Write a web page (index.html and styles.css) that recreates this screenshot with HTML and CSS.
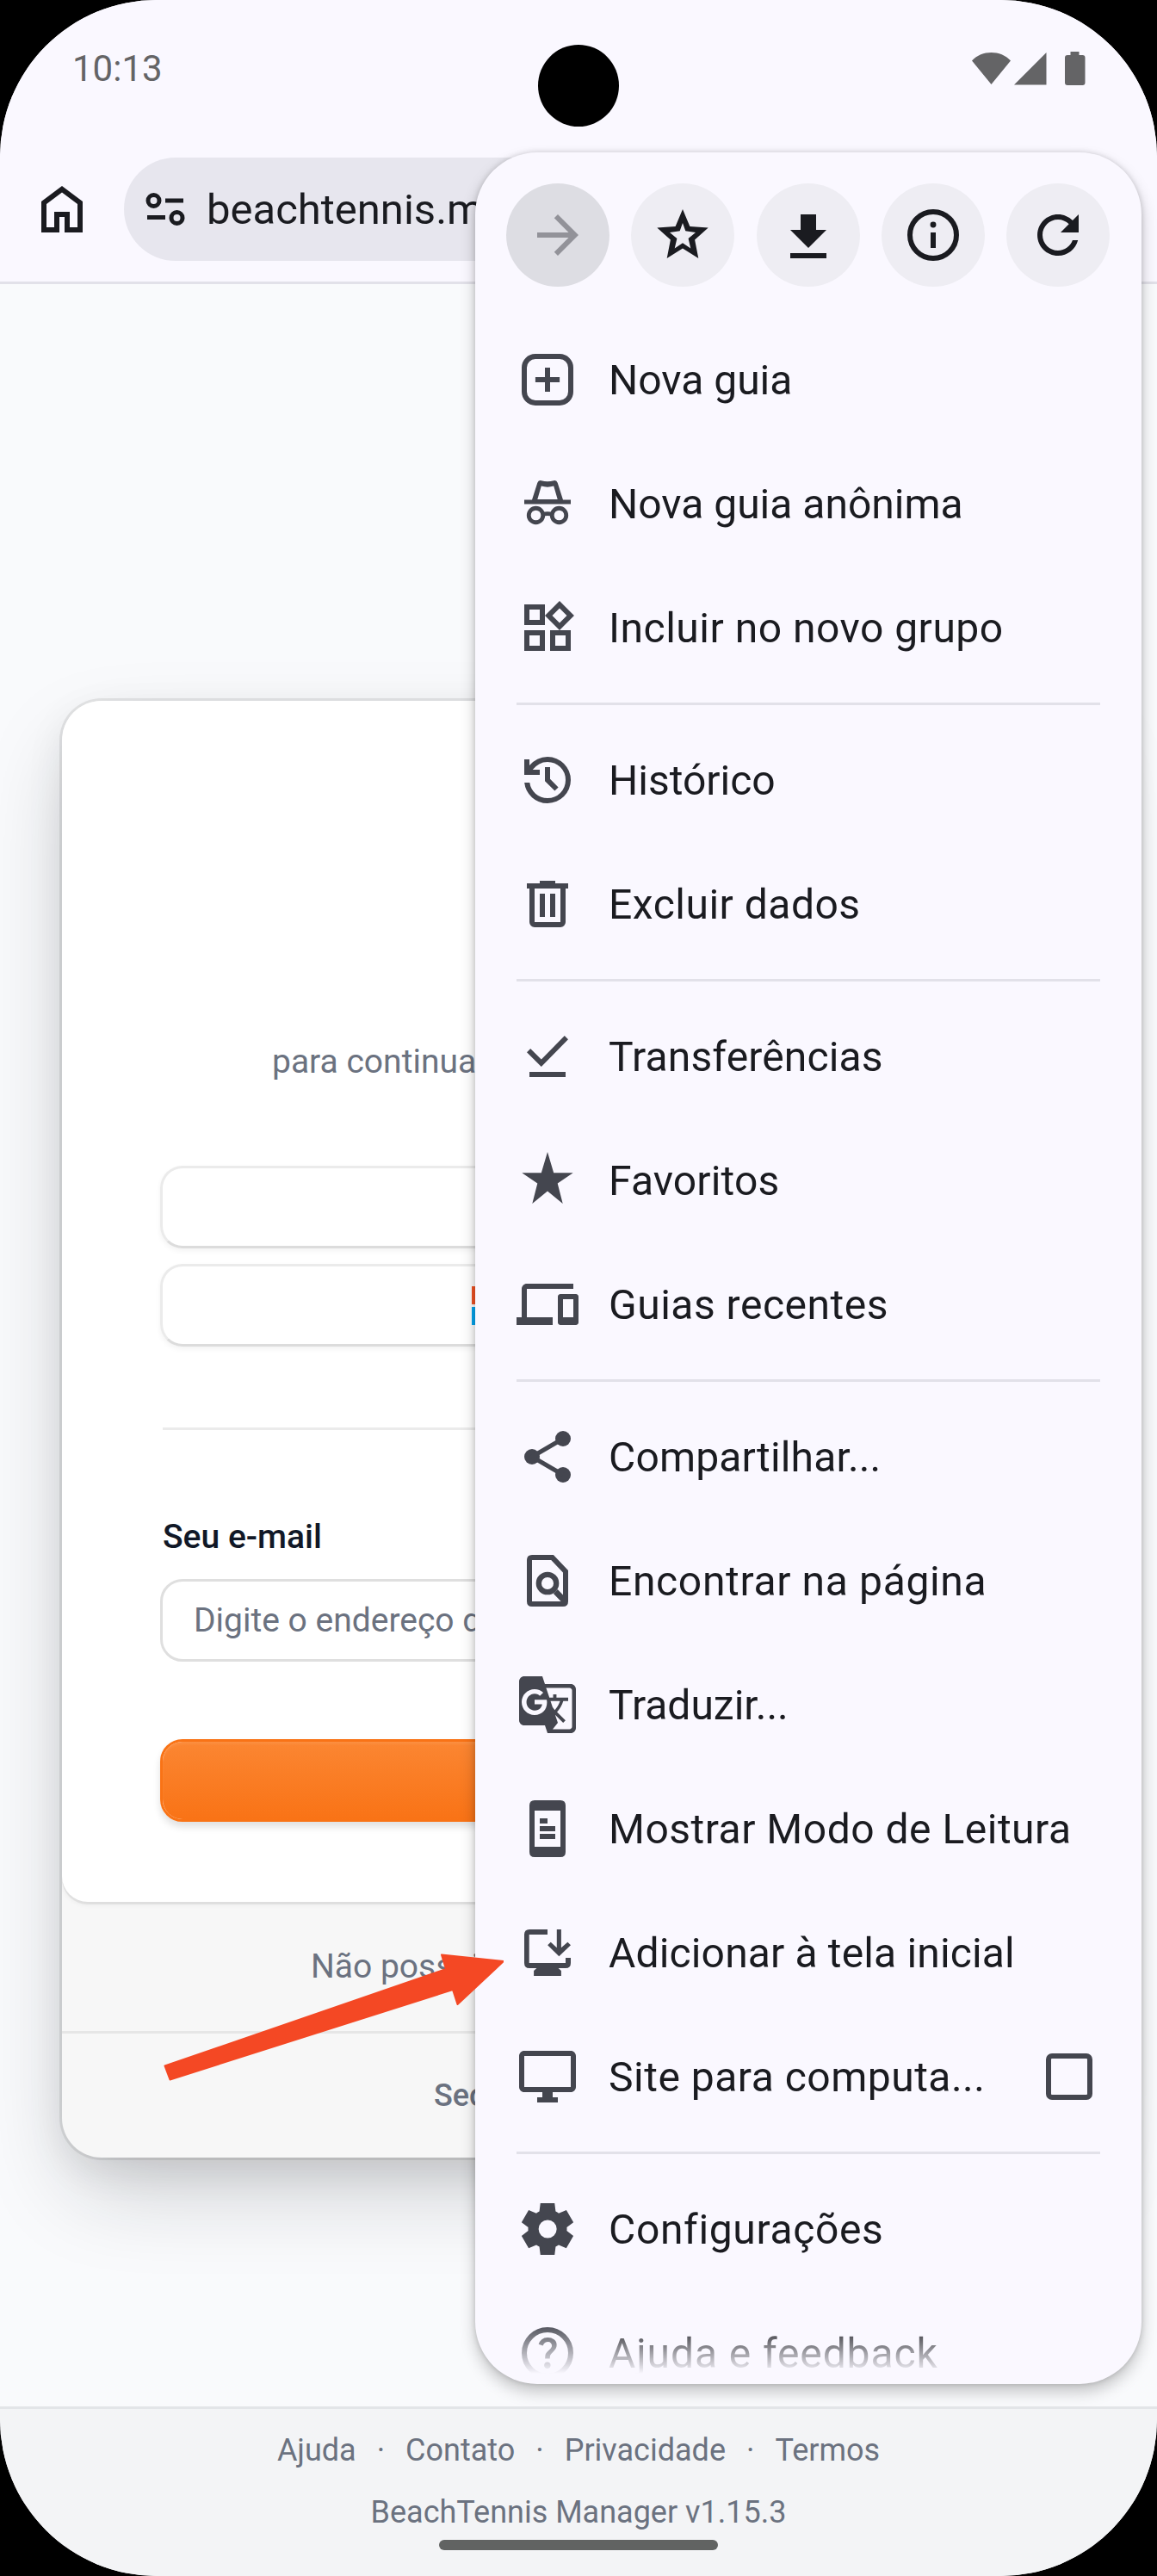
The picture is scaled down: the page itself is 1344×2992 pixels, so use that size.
FILE: index.html
```html
<!DOCTYPE html>
<html lang="pt-BR">
<head>
<meta charset="utf-8">
<title>BeachTennis Manager</title>
<link rel="stylesheet" href="styles.css">
</head>
<body>
<div class="screen">
  <header class="status-bar">
    <span class="time">10:13</span>
    <svg class="status-icons" width="132" height="40" viewBox="0 0 132 40"><path d="M0 10.500C6 4 14 1 22.500 1S39 4 45 10.500L22.500 38zM86.500 1v37.500H49zM114.500 0h10v4h4q3 0 3 3v29q0 3-3 3h-17.500q-3 0-3-3V7q0-3 3-3h3.500z"/></svg>
    <span class="camera"></span>
  </header>

  <div class="toolbar">
    <svg class="icon home" viewBox="0 0 24 24"><path d="M6 19h3v-6h6v6h3v-9l-6-4.500L6 10v9Zm-2 2V9l8-6 8 6v12h-7v-6h-2v6H4Z"/></svg>
    <div class="url">
      <svg class="site-info" width="48" height="44" viewBox="0 0 48 44" fill="none" stroke="#1a1b20" stroke-width="5"><circle cx="10.500" cy="12" r="6.500"/><path d="M24 12h21M3 31.500h21"/><circle cx="37.500" cy="32" r="6.500"/></svg>
      <span class="url-text">beachtennis.m</span>
    </div>
  </div>

  <main class="page">
    <section class="card">
      <div class="card-main">
        <p class="subtitle">para continuar</p>
        <div class="social"></div>
        <div class="social">
          <svg width="45" height="45" viewBox="0 0 45 45"><path fill="#f35325" d="M0 0h21v21H0z"/><path fill="#81bc06" d="M24 0h21v21H24z"/><path fill="#05a6f0" d="M0 24h21v21H0z"/><path fill="#ffba08" d="M24 24h21v21H24z"/></svg>
        </div>
        <div class="rule"></div>
        <span class="label">Seu e-mail</span>
        <div class="input">Digite o endereço de</div>
        <div class="submit"></div>
      </div>
      <div class="card-row signup">Não possui</div>
      <div class="card-row secured">Secured</div>
    </section>
  </main>

  <footer class="footer">
    <nav class="links"><span>Ajuda</span><span>·</span><span>Contato</span><span>·</span><span>Privacidade</span><span>·</span><span>Termos</span></nav>
    <p class="version">BeachTennis Manager v1.15.3</p>
  </footer>

  <div class="menu">
    <div class="actions">
      <span class="action off"><svg class="icon" viewBox="0 0 24 24"><path d="M12 4l-1.410 1.410L16.170 11H4v2h12.170l-5.580 5.590L12 20l8-8z"/></svg></span>
      <span class="action"><svg class="icon" viewBox="0 0 24 24"><path fill-rule="evenodd" d="M12 2l2.800 6.700 7.100.500-5.200 4.600L18.100 21 12 17.200 5.900 21l1.400-7.200L2.100 9.200l7.100-.500zM12 7.300l-1.100 3.100-3.900.600 2.800 2.300-.900 3.900 3.100-2.100 3.100 2.100-.900-3.900L17 11l-3.900-.600z"/></svg></span>
      <span class="action"><svg class="icon" viewBox="0 0 24 24"><path d="M19 10h-4V4H9v6H5l7 7 7-7zM5 19v2h14v-2H5z"/></svg></span>
      <span class="action"><svg class="icon" viewBox="0 0 24 24"><circle cx="12" cy="12" r="9" fill="none" stroke="currentColor" stroke-width="2"/><circle cx="12" cy="8" r="1.150"/><path d="M11 11h2v6h-2z"/></svg></span>
      <span class="action"><svg class="icon" viewBox="0 0 24 24"><path d="M17.650 6.350C16.200 4.900 14.210 4 12 4c-4.420 0-7.990 3.580-7.990 8s3.570 8 7.990 8c3.730 0 6.840-2.550 7.730-6h-2.080c-.820 2.330-3.040 4-5.650 4-3.310 0-6-2.690-6-6s2.690-6 6-6c1.660 0 3.140.690 4.220 1.780L13 11h7V4l-2.350 2.350z"/></svg></span>
    </div>

    <div class="items">
      <div class="item"><svg class="icon" viewBox="0 0 24 24"><rect x="3" y="3" width="18" height="18" rx="4.300" fill="none" stroke="currentColor" stroke-width="2"/><path d="M11 7.300h2V11h3.700v2H13v3.700h-2V13H7.300v-2H11z"/></svg><span>Nova guia</span></div>
      <div class="item"><svg class="icon" viewBox="0 0 24 24"><path fill-rule="evenodd" d="M3 10.500h3L8.100 3.900Q8.500 2.800 9.600 3.100q2.400.700 4.800 0 1.100-.300 1.500.800l2.100 6.600h3v1.700H3zM8.100 10.300h7.800L14.400 5.200q-2.400.700-4.800 0z"/><g fill="none" stroke="currentColor" stroke-width="1.600"><circle cx="7.500" cy="16.500" r="2.750"/><circle cx="16.500" cy="16.500" r="2.750"/><path d="M10.200 16.100q1.800-.500 3.600 0"/></g></svg><span>Nova guia anônima</span></div>
      <div class="item"><svg class="icon" viewBox="0 0 24 24"><path d="M16.660 4.520l2.830 2.830-2.830 2.830-2.830-2.830 2.830-2.830M9 5v4H5V5h4m10 10v4h-4v-4h4M9 15v4H5v-4h4m7.660-13.310L11 7.340 16.660 13l5.660-5.660-5.660-5.650zM11 3H3v8h8V3zm10 10h-8v8h8v-8zm-10 0H3v8h8v-8z"/></svg><span class="wide">Incluir no novo grupo</span></div>
      <div class="divider"></div>
      <div class="item"><svg class="icon" viewBox="0 0 24 24"><path d="M12 21q-3.450 0-6.012-2.288T3.050 13H5.100q.350 2.600 2.312 4.300T12 19q2.925 0 4.963-2.037T19 12q0-2.925-2.037-4.963T12 5q-1.725 0-3.225.800T6.250 8H9v2H3V4h2v2.350q1.275-1.600 3.112-2.475T12 3q1.875 0 3.513.713t2.850 1.925 1.925 2.850T21 12t-.713 3.513-1.925 2.850-2.850 1.925T12 21Zm2.800-4.800L11 12.400V7h2v4.600l3.200 3.200-1.400 1.400Z"/></svg><span>Histórico</span></div>
      <div class="item"><svg class="icon" viewBox="0 0 24 24"><path fill-rule="evenodd" d="M7 21q-.825 0-1.413-.587T5 19V6H4V4h5V3h6v1h5v2h-1v13q0 .825-.587 1.413T17 21H7ZM17 6H7v13h10V6ZM9 17h2V8H9v9Zm4 0h2V8h-2v9Z"/></svg><span class="wide">Excluir dados</span></div>
      <div class="divider"></div>
      <div class="item"><svg class="icon" viewBox="0 0 24 24"><path d="M5 20v-2h14v2H5Zm4.600-4L4 10.400 5.400 9l4.200 4.200L18.600 4 20 5.400 9.600 16Z"/></svg><span class="loose">Transferências</span></div>
      <div class="item"><svg class="icon" viewBox="0 0 24 24"><path d="M12 1l2.400 8.100h7.500l-6 4.100 2 7.800-5.900-4.800L6.100 21l2-7.800-6-4.100h7.500z"/></svg><span class="loose">Favoritos</span></div>
      <div class="item"><svg class="icon" viewBox="0 0 24 24"><path d="M4 6h18V4H4c-1.100 0-2 .900-2 2v11H0v3h14v-3H4V6zm19 2h-6c-.550 0-1 .450-1 1v10c0 .550.450 1 1 1h6c.550 0 1-.450 1-1V9c0-.550-.450-1-1-1zm-1 9h-4v-7h4v7z"/></svg><span class="wide">Guias recentes</span></div>
      <div class="divider"></div>
      <div class="item"><svg class="icon" viewBox="0 0 24 24"><circle cx="18" cy="5" r="3"/><circle cx="6" cy="12" r="3"/><circle cx="18" cy="19" r="3"/><path d="M18 5L6 12l12 7" fill="none" stroke="currentColor" stroke-width="1.700"/></svg><span class="loose">Compartilhar...</span></div>
      <div class="item"><svg class="icon" viewBox="0 0 24 24"><path fill-rule="evenodd" d="M6 2h8.300L20 8v12q0 2-2 2H6q-2 0-2-2V4q0-2 2-2zm0 2v16h11.200l-2.900-3 1.600-1.700L18 17.500V8.800L13.400 4z"/><circle cx="12" cy="13" r="3.400" fill="none" stroke="currentColor" stroke-width="2.100"/></svg><span class="wider">Encontrar na página</span></div>
      <div class="item"><svg class="icon" viewBox="0 0 24 24"><path d="M21 4H11l-1-3H3c-1.100 0-2 .900-2 2v15c0 1.100.900 2 2 2h8l1 3h9c1.100 0 2-.900 2-2V6c0-1.100-.900-2-2-2zM7 16c-2.760 0-5-2.240-5-5s2.240-5 5-5c1.350 0 2.480.500 3.350 1.300L9.030 8.570c-.380-.360-1.040-.780-2.030-.780-1.740 0-3.150 1.440-3.150 3.210S5.260 14.210 7 14.210c2.010 0 2.840-1.440 2.920-2.410H7v-1.710h4.680c.070.310.120.610.120 1.020C11.800 13.970 9.890 16 7 16zm6.170-5.420h3.700c-.430 1.250-1.110 2.430-2.050 3.470-.310-.350-.600-.720-.860-1.100l-.790-2.370zm8.330 9.920c0 .550-.450 1-1 1H14l2-2.500-1.040-3.100 3.100 3.100.920-.920-3.300-3.250.020-.020c1.130-1.250 1.930-2.690 2.400-4.220H20v-1.300h-4.530V8h-1.290v1.290h-1.440L11.460 5.500h9.040c.550 0 1 .450 1 1v14z"/></svg><span>Traduzir...</span></div>
      <div class="item"><svg class="icon" viewBox="0 0 24 24"><path fill-rule="evenodd" d="M7 1h10q2 0 2 2v18q0 2-2 2H7q-2 0-2-2V3q0-2 2-2zm0 4v14h10V5zm2 3h3v2H9zm0 3h6v2H9zm0 3h6v2H9z"/></svg><span class="wide">Mostrar Modo de Leitura</span></div>
      <div class="item"><svg class="icon" viewBox="0 0 24 24"><path d="M5 3h7v2H4.900v11H19v-2h2v2q0 2-2 2h-2.800l1.100 1v2H6.700v-2l1.100-1H5q-2 0-2-2V5q0-2 2-2zM15.600 3h1.700v7.100l2.500-2.200L21 9.100l-4.550 4.300-4.400-4.300 1.200-1.200 2.350 2.200z"/></svg><span class="loose">Adicionar à tela inicial</span></div>
      <div class="item"><svg class="icon" viewBox="0 0 24 24"><path d="M21 2H3c-1.100 0-2 .900-2 2v12c0 1.100.900 2 2 2h7v2H8v2h8v-2h-2v-2h7c1.100 0 2-.900 2-2V4c0-1.100-.900-2-2-2zm0 14H3V4h18v12z"/></svg><span class="wide">Site para computa...</span><i class="checkbox"></i></div>
      <div class="divider"></div>
      <div class="item"><svg class="icon" viewBox="0 0 24 24"><path d="M9.250 22l-.400-3.200q-.325-.125-.613-.300t-.562-.375L4.700 19.375l-2.750-4.750 2.575-1.950q-.025-.175-.025-.338v-.675q0-.162.025-.337L1.950 9.375l2.750-4.750 2.975 1.250q.275-.200.575-.375t.600-.300l.400-3.200h5.500l.400 3.200q.325.125.613.300t.562.375l2.975-1.250 2.750 4.750-2.575 1.950q.025.175.025.338v.675q0 .162-.050.337l2.575 1.950-2.750 4.750-2.950-1.250q-.275.200-.575.375t-.600.300l-.400 3.200h-5.500Zm2.800-6.500q1.450 0 2.475-1.025T15.550 12t-1.025-2.475T12.050 8.500t-2.475 1.025T8.550 12t1.025 2.475T12.050 15.500Z"/></svg><span class="wider">Configurações</span></div>
      <div class="item"><svg class="icon" viewBox="0 0 24 24"><circle cx="12" cy="12" r="9" fill="none" stroke="currentColor" stroke-width="2"/><path d="M11.950 18q.525 0 .888-.363t.362-.887-.362-.888-.888-.362-.887.362-.363.888.363.887.887.363Zm-.900-3.850h1.850q0-.825.188-1.300t1.062-1.300q.650-.650 1.025-1.238T15.550 8.900q0-1.400-1.025-2.150T12.100 6q-1.425 0-2.313.750T8.550 8.550l1.650.650q.125-.450.563-.975T12.100 7.700q.800 0 1.200.438t.400.962q0 .500-.300.938t-.750.812q-1.100.975-1.350 1.475t-.250 1.825Z"/></svg><span class="widest">Ajuda e feedback</span></div>
    </div>
  </div>

  <svg class="arrow" width="400" height="152" viewBox="0 0 400 152"><path fill="#f44824" stroke="#f44824" stroke-width="2" stroke-linejoin="round" d="M6.500 134.500L333 22l-5-16.500L400 13l-53.500 50-5.500-17L12.500 150.500z"/></svg>
  <div class="nav-handle"></div>
</div>
</body>
</html>
```
FILE: styles.css
```css
* { box-sizing: border-box; }

body {
  margin: 0;
  background: #000;
  font-family: Roboto, "Liberation Sans", sans-serif;
}

p { margin: 0; }

.screen {
  position: relative;
  display: flex;
  flex-direction: column;
  width: 1344px;
  height: 2992px;
  overflow: hidden;
  border-radius: 182px;
  background: #f9fafc;
}

.icon {
  flex: none;
  width: 72px;
  height: 72px;
  fill: currentColor;
}

/* Status bar */
.status-bar {
  display: flex;
  justify-content: space-between;
  align-items: center;
  height: 159px;
  padding: 0 83px 0 84px;
  background: #faf8ff;
  color: #646466;
}

.time { font-size: 42px; }

.status-icons { fill: #646466; }

.camera {
  position: absolute;
  top: 52px;
  left: 625px;
  width: 94px;
  height: 95px;
  border-radius: 50%;
  background: #000;
}

/* Browser toolbar */
.toolbar {
  display: flex;
  align-items: center;
  gap: 36px;
  height: 171px;
  padding-left: 36px;
  border-bottom: 3px solid #e2e1e9;
  background: #faf8ff;
  color: #1a1b20;
}

.url {
  display: flex;
  align-items: center;
  gap: 24px;
  width: 850px;
  height: 120px;
  padding-left: 24px;
  border-radius: 60px;
  background: #e7e6ee;
}

.url-text { font-size: 49px; }

/* Sign-in page */
.page {
  flex: none;
  height: 2465px;
  padding: 484px 72px 0;
}

.card {
  height: 1692px;
  overflow: hidden;
  border-radius: 46px;
  background: #f7f7f7;
  box-shadow:
    0 0 0 3px rgba(0, 0, 0, .08),
    0 15px 45px rgba(0, 0, 0, .08),
    0 45px 105px -15px rgba(25, 28, 33, .22);
}

.card-main {
  display: flex;
  flex-direction: column;
  height: 1395px;
  padding: 392px 114px 0;
  border-radius: 0 0 30px 30px;
  background: #fff;
  box-shadow: 0 3px 0 rgba(0, 0, 0, .06), 0 3px 6px rgba(0, 0, 0, .06);
}

.subtitle {
  margin: 0 0 94px 130px;
  color: #6b7280;
  font-size: 39px;
  line-height: 54px;
}

.social {
  display: flex;
  align-items: center;
  height: 96px;
  margin-bottom: 18px;
  padding-left: 359px;
  border: 3px solid #ebebeb;
  border-bottom-color: #dcdcdc;
  border-radius: 26px;
  box-shadow: 0 3px 6px rgba(0, 0, 0, .05);
}

.rule {
  height: 3px;
  margin: 76px 3px 97px;
  background: #ebebeb;
}

.label {
  margin-left: 3px;
  color: #111827;
  font-size: 39px;
  font-weight: 500;
  line-height: 54px;
}

.input {
  height: 96px;
  margin: 22px 0 90px;
  padding-left: 36px;
  border: 3px solid #dfdfdf;
  border-radius: 26px;
  color: #6b7280;
  font-size: 39px;
  line-height: 90px;
}

.submit {
  height: 96px;
  border: 3px solid #f97316;
  border-radius: 26px;
  background: linear-gradient(#fb8632, #f97316) padding-box;
  box-shadow: 0 6px 9px rgba(0, 0, 0, .12), inset 0 3px 3px rgba(255, 255, 255, .07);
}

.card-row {
  display: flex;
  align-items: center;
  color: #6b7280;
}

.signup {
  height: 150px;
  padding-left: 289px;
  font-size: 39px;
}

.secured {
  height: 147px;
  padding-left: 432px;
  border-top: 3px solid #e6e6e6;
  font-size: 36px;
  font-weight: 500;
}

.footer {
  flex: none;
  height: 197px;
  padding-top: 12px;
  border-top: 3px solid #e3e5e8;
  background: #f3f4f6;
  color: #6b7280;
  font-size: 36px;
  line-height: 72px;
  text-align: center;
}

.links {
  display: flex;
  justify-content: center;
  gap: 24px;
}

/* Overflow menu */
.menu {
  position: absolute;
  top: 177px;
  left: 552px;
  display: flex;
  flex-direction: column;
  width: 774px;
  height: 2592px;
  padding-bottom: 12px;
  border-radius: 72px;
  background: #faf8ff;
  box-shadow: 0 9px 18px rgba(0, 0, 0, .22), 0 0 6px rgba(0, 0, 0, .16);
}

.actions {
  display: flex;
  flex: none;
  justify-content: space-between;
  height: 192px;
  padding: 36px 37px 0 36px;
}

.action {
  display: flex;
  align-items: center;
  justify-content: center;
  width: 120px;
  height: 120px;
  border-radius: 50%;
  background: #eeedf3;
  color: #1a1b20;
}

.action.off {
  background: #dddde3;
  color: #929299;
}

.items {
  flex: 1;
  min-height: 0;
  overflow: hidden;
  -webkit-mask-image: linear-gradient(to top, transparent, #000 60px);
  mask-image: linear-gradient(to top, transparent, #000 60px);
}

.item {
  display: flex;
  align-items: center;
  gap: 35px;
  height: 144px;
  padding: 0 57px 0 48px;
  color: #44464f;
}

.item span {
  padding-top: 2px;
  color: #1a1b20;
  font-size: 48px;
  line-height: 56px;
  white-space: nowrap;
}

.item .loose { letter-spacing: .15px; }
.item .wide { letter-spacing: .5px; }
.item .wider { letter-spacing: .65px; }
.item .widest { letter-spacing: .9px; }

.divider {
  height: 3px;
  margin: 15px 48px;
  background: #e2e1e9;
}

.checkbox {
  width: 54px;
  height: 54px;
  margin-left: auto;
  border: 6px solid #44464f;
  border-radius: 7px;
}

/* Pointer drawn over the page and the menu */
.arrow {
  position: absolute;
  top: 2265px;
  left: 185px;
}

.nav-handle {
  position: absolute;
  top: 2950px;
  left: 510px;
  width: 324px;
  height: 12px;
  border-radius: 6px;
  background: #616362;
}
```
